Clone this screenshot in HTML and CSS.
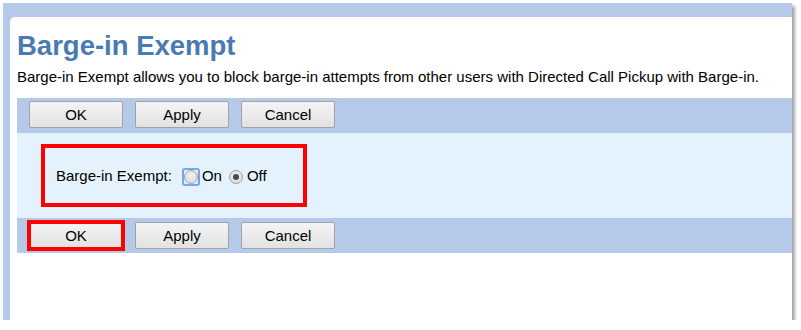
FILE: index.html
```html
<!DOCTYPE html>
<html lang="en">
<head>
  <meta charset="UTF-8" />
  <title>Barge-in Exempt</title>
  <link rel="stylesheet" href="styles.css">
</head>
<body>
  <div class="frame">
    <div class="page">
      <h1>Barge-in Exempt</h1>
      <p class="intro">Barge-in Exempt allows you to block barge-in attempts from other users with Directed Call Pickup with Barge-in.</p>

      <!-- Botones superiores -->
      <div class="bar">
        <button class="btn">OK</button>
        <button class="btn">Apply</button>
        <button class="btn">Cancel</button>
      </div>

      <div class="content">
        <div class="field-box">
          <span class="field-label">Barge-in Exempt:</span>
          <label class="choice"><span class="radio focused"></span>On</label>
          <label class="choice"><span class="radio checked"></span>Off</label>
        </div>
      </div>

      <!-- Botones inferiores -->
      <div class="bar">
        <button class="btn marked">OK</button>
        <button class="btn">Apply</button>
        <button class="btn">Cancel</button>
      </div>
    </div>
  </div>
</body>
</html>
```

FILE: styles.css
```css
body {
  margin: 0;
  background-color: #fff;
  font-family: "Liberation Sans", Arial, sans-serif;
  color: #000;
}

.frame {
  margin: 3px 0 0 3px;
  width: 782px;
  height: 303px;
  padding: 14px 0 0 7px;
  background-color: #b5c9e9;
  box-shadow: 3px 3px 3px rgba(0, 0, 0, 0.35);
}

.page {
  height: 100%;
  background-color: #fff;
  border-top-left-radius: 5px;
  padding-left: 7px;
  box-sizing: border-box;
}

h1 {
  margin: 0;
  padding-top: 13px;
  font-size: 27.5px;
  line-height: 32px;
  font-weight: bold;
  color: #4a7ab2;
}

.intro {
  margin: 6px 0 0;
  font-size: 15px;
  line-height: 17px;
}

.bar {
  display: flex;
  gap: 12px;
  height: 35px;
  padding: 3px 0 0 12px;
  box-sizing: border-box;
  background-color: #b5c9e9;
}

.intro + .bar {
  margin-top: 13px;
}

.btn {
  width: 94px;
  height: 27px;
  padding: 0;
  font-family: "Liberation Sans", Arial, sans-serif;
  font-size: 15px;
  color: #000;
  background: linear-gradient(#f4f4f4, #e2e2e2);
  border: 1px solid #a3a3a3;
  border-radius: 2px;
}

.bar:last-child {
  padding-top: 4px;
}

.btn.marked {
  border-radius: 0;
  outline: 4px solid #f00;
  outline-offset: -2px;
}

.content {
  height: 85px;
  padding: 11px 0 0 24px;
  box-sizing: border-box;
  background-color: #e4f2fd;
}

.field-box {
  display: flex;
  align-items: center;
  width: 266px;
  height: 63px;
  padding-left: 11px;
  box-sizing: border-box;
  border: 4px solid #f00;
  font-size: 15px;
}

.field-label {
  margin-right: 12px;
}

.choice {
  display: flex;
  align-items: center;
  margin-right: 7px;
}

.radio {
  position: relative;
  width: 12px;
  height: 12px;
  margin: 2px 4px 0 0;
  border: 1px solid #a2a2a2;
  border-radius: 50%;
  background: radial-gradient(circle at 50% 40%, #f3f3f3, #d4d4d4);
}

/* anillo de foco */
.radio.focused::before {
  content: "";
  position: absolute;
  top: -3px;
  left: -3px;
  width: 14px;
  height: 14px;
  border: 2px solid #78a4e8;
  border-radius: 3px;
}

.radio.checked::after {
  content: "";
  position: absolute;
  top: 3px;
  left: 3px;
  width: 6px;
  height: 6px;
  border-radius: 50%;
  background-color: #4a4a4a;
}
```
